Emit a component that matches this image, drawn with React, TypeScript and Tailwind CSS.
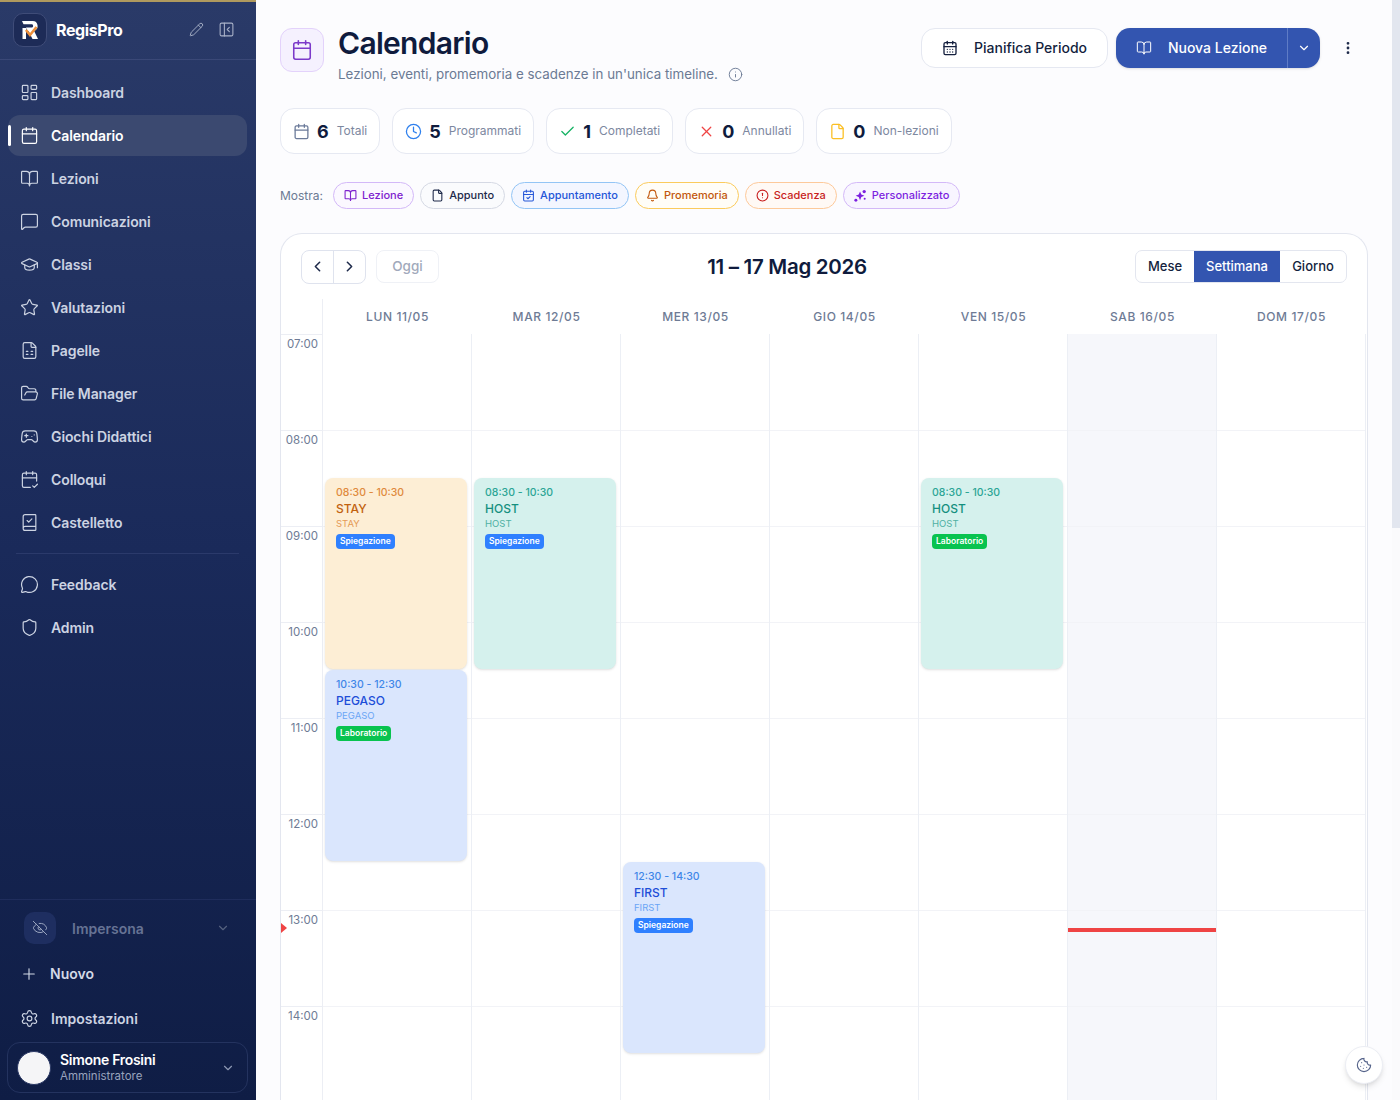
import React from 'react';
import {
  LayoutDashboard, Calendar, BookOpen, MessageSquare, GraduationCap, Star, FileSpreadsheet, FolderOpen,
  Gamepad2, CalendarCheck2, BookCheck, MessageCircle, Shield, EyeOff, Plus, Settings, ChevronDown, Pencil,
  PanelLeftClose, Info, Clock, Check, X, File, Bell, CircleAlert, CalendarDays, CalendarCheck,
  EllipsisVertical, Cookie, ChevronLeft, ChevronRight,
} from 'lucide-react';

const navTop = [
  { label: 'Dashboard', icon: LayoutDashboard },
  { label: 'Calendario', icon: Calendar, active: true },
  { label: 'Lezioni', icon: BookOpen },
  { label: 'Comunicazioni', icon: MessageSquare },
  { label: 'Classi', icon: GraduationCap },
  { label: 'Valutazioni', icon: Star },
  { label: 'Pagelle', icon: FileSpreadsheet },
  { label: 'File Manager', icon: FolderOpen },
  { label: 'Giochi Didattici', icon: Gamepad2 },
  { label: 'Colloqui', icon: CalendarCheck2 },
  { label: 'Castelletto', icon: BookCheck },
];

const stats = [
  { n: '6', label: 'Totali', icon: Calendar, color: 'text-[#6b7a99]' },
  { n: '5', label: 'Programmati', icon: Clock, color: 'text-[#2f80ed]' },
  { n: '1', label: 'Completati', icon: Check, color: 'text-[#16b364]' },
  { n: '0', label: 'Annullati', icon: X, color: 'text-[#ef4444]' },
  { n: '0', label: 'Non-lezioni', icon: File, color: 'text-[#fbbf24]' },
];

// filled sparkle cluster of the "Personalizzato" chip
const SparkleCluster = ({ size }: { size: number; strokeWidth?: number }) => (
  <svg width={size} height={size} viewBox="0 0 14 14" fill="currentColor">
    <path d="M6.5 2.6l1.4 3.3 3.3 1.4-3.3 1.4-1.4 3.3-1.4-3.3-3.3-1.4 3.3-1.4z" />
    <circle cx="11" cy="2.8" r="1.8" />
    <circle cx="2" cy="12" r="1.6" />
    <circle cx="11.5" cy="10.5" r="1.1" />
  </svg>
);

const chips = [
  { label: 'Lezione', icon: BookOpen, cls: 'border-[#d3b8f8] bg-[#fbf8ff] text-[#7e22ce]' },
  { label: 'Appunto', icon: File, cls: 'border-[#d5d9e4] bg-[#fafbfd] text-[#1e2a4a]' },
  { label: 'Appuntamento', icon: CalendarCheck, cls: 'border-[#93c5f5] bg-[#f3f6ff] text-[#2556d8]' },
  { label: 'Promemoria', icon: Bell, cls: 'border-[#fbcb5c] bg-[#fffdf7] text-[#c2570c]' },
  { label: 'Scadenza', icon: CircleAlert, cls: 'border-[#fdc99a] bg-[#fff9f5] text-[#c81e1e]' },
  { label: 'Personalizzato', icon: SparkleCluster, cls: 'border-[#d3b8f8] bg-[#f8f5ff] text-[#7c1fe0]' },
];

const days = ['LUN 11/05', 'MAR 12/05', 'MER 13/05', 'GIO 14/05', 'VEN 15/05', 'SAB 16/05', 'DOM 17/05'];
const hours = ['07:00', '08:00', '09:00', '10:00', '11:00', '12:00', '13:00', '14:00'];

const orange = { box: 'bg-[#fdeed5]', time: 'text-[#e08a3c]', title: 'text-[#c2620f]', sub: 'text-[#e59a55]' };
const teal = { box: 'bg-[#d5f1ed]', time: 'text-[#2ba595]', title: 'text-[#14907f]', sub: 'text-[#4fb0a3]' };
const blue = { box: 'bg-[#dae6fd]', time: 'text-[#3f86e8]', title: 'text-[#1d4ed8]', sub: 'text-[#6aa5f5]' };

const events = [
  { day: 0, top: 'top-[144px]', time: '08:30 - 10:30', title: 'STAY', tag: 'Spiegazione', c: orange },
  { day: 1, top: 'top-[144px]', time: '08:30 - 10:30', title: 'HOST', tag: 'Spiegazione', c: teal },
  { day: 4, top: 'top-[144px]', time: '08:30 - 10:30', title: 'HOST', tag: 'Laboratorio', c: teal },
  { day: 0, top: 'top-[336px]', time: '10:30 - 12:30', title: 'PEGASO', tag: 'Laboratorio', c: blue },
  { day: 2, top: 'top-[528px]', time: '12:30 - 14:30', title: 'FIRST', tag: 'Spiegazione', c: blue },
];

const NavItem = ({ label, icon: Icon, active }: { label: string; icon: any; active?: boolean }) => (
  <div className={`relative flex h-[41px] items-center gap-[12px] rounded-[12px] pl-[12px] text-[14px] font-semibold tracking-[-0.1px] ${active ? 'bg-[#3b4970] text-white' : 'text-[#ccd3e2]'}`}>
    {active && <span className="absolute left-0 top-[10px] h-[21px] w-[3px] rounded-full bg-white" />}
    <Icon size={19} strokeWidth={1.5} />
    {label}
  </div>
);

const Sidebar = () => (
  <aside className="flex h-[1100px] w-[256px] shrink-0 flex-col bg-gradient-to-b from-[#2a3a68] via-[#1a2a5a] to-[#0f1d45]">
    <div className="h-[2px] bg-[#b09a5e]" />
    <div className="flex h-[58px] items-center border-b border-[#3a4877] pb-[2px] pl-[13px] pr-[21px]">
      <div className="flex h-[34px] w-[34px] items-center justify-center rounded-[10px] border border-[#3f4c78] bg-[#1d2b57]">
        <svg width="20" height="22" viewBox="0 0 20 22" fill="none">
          <path d="M2 2h10.5a5 5 0 0 1 1.5 9.8L18 20h-5.5L8.5 12H7l-1-3.5h6a1.7 1.7 0 0 0 0-3.2H3.5z" fill="#fff" />
          <path d="M2.5 9H6v11H2.5z" fill="#fff" />
          <path d="M6 11l4 5 6.5-8" stroke="#ee8f3a" strokeWidth="2.6" fill="none" />
        </svg>
      </div>
      <span className="ml-[9px] text-[16px] font-bold tracking-[-0.4px] text-white">RegisPro</span>
      <Pencil size={15} strokeWidth={1.5} className="ml-auto text-[#aab3c9]" />
      <PanelLeftClose size={17} strokeWidth={1.5} className="ml-[14px] text-[#aab3c9]" />
    </div>
    <nav className="flex flex-col gap-[2px] pl-[8px] pr-[9px] pt-[12px]">
      {navTop.map((n) => <NavItem key={n.label} {...n} />)}
      <div className="mx-[8px] my-[8px] h-px bg-[#2b3a6b]" />
      <NavItem label="Feedback" icon={MessageCircle} />
      <NavItem label="Admin" icon={Shield} />
    </nav>
    <div className="mt-auto border-t border-[#1f2d5c] pb-[7px]">
      <div className="flex h-[56px] items-center pl-[24px] pr-[26px]">
        <div className="flex h-[32px] w-[32px] items-center justify-center rounded-[10px] bg-[#1e2e60]">
          <EyeOff size={16} strokeWidth={1.5} className="text-[#9ba6c0]" />
        </div>
        <span className="ml-[16px] text-[14px] font-semibold text-[#667394]">Impersona</span>
        <ChevronDown size={14} className="ml-auto text-[#55627f]" />
      </div>
      <div className="mt-[2px] flex h-[31px] items-center gap-[12px] pl-[20px] text-[14px] font-semibold text-[#d3d9e6]">
        <Plus size={18} strokeWidth={1.5} />
        Nuovo
      </div>
      <div className="mt-[14px] flex h-[31px] items-center gap-[12px] pl-[20px] text-[14px] font-semibold text-[#ccd3e2]">
        <Settings size={19} strokeWidth={1.5} />
        Impostazioni
      </div>
      <div className="ml-[7px] mr-[8px] mt-[8px] flex h-[51px] items-center rounded-[13px] border border-[#24335f] pl-[9px] pr-[12px]">
        <div className="h-[34px] w-[34px] rounded-full border border-[#2c3a66] bg-[#f5f5f7]" />
        <div className="ml-[9px]">
          <div className="text-[14px] font-semibold leading-[17px] tracking-[-0.3px] text-white">Simone Frosini</div>
          <div className="text-[11.5px] leading-[17px] text-[#98a3bd]">Amministratore</div>
        </div>
        <ChevronDown size={14} className="ml-auto text-[#8d98b3]" />
      </div>
    </div>
  </aside>
);

const PageHeader = () => (
  <div className="flex h-[80px] items-start">
    <div className="flex h-[44px] w-[44px] items-center justify-center rounded-[12px] border border-[#e3d2fb] bg-[#f5f1fe]">
      <Calendar size={22} strokeWidth={1.7} className="text-[#7c3aca]" />
    </div>
    <div className="ml-[14px]">
      <h1 className="mt-[-4px] text-[30px] font-semibold leading-[38px] tracking-[-0.7px] text-[#0f1b3d]">Calendario</h1>
      <div className="mt-[3px] flex items-center gap-[10px] text-[13.35px] leading-[18px] text-[#6b7a94]">
        Lezioni, eventi, promemoria e scadenze in un'unica timeline.
        <Info size={15} strokeWidth={1.5} />
      </div>
    </div>
    <div className="ml-auto flex items-center">
      <button className="flex h-[40px] w-[187px] items-center justify-center gap-[16px] rounded-[14px] border border-[#e5e8f1] bg-white pb-[1px] text-[14px] font-medium text-[#141f3e]">
        <CalendarDays size={16} strokeWidth={2} />
        Pianifica Periodo
      </button>
      <div className="ml-[8px] flex h-[40px] w-[204px] items-center rounded-[14px] bg-[#3355b0] text-white shadow-sm">
        <div className="flex h-full flex-1 items-center justify-center gap-[16px] pb-[1px] text-[14px] font-medium">
          <BookOpen size={16} strokeWidth={1.5} />
          Nuova Lezione
        </div>
        <div className="flex h-full w-[33px] items-center justify-center border-l border-[#5f7cc6]">
          <ChevronDown size={14} />
        </div>
      </div>
      <EllipsisVertical size={16} strokeWidth={2.2} className="ml-[20px] mr-[12px] text-[#1e2a4a]" />
    </div>
  </div>
);

const Stats = () => (
  <div className="flex gap-[12px]">
    {stats.map((s) => (
      <div key={s.label} className="flex h-[46px] items-center rounded-[14px] border border-[#e6e9f2] bg-white pl-[12px] pr-[12px]">
        <s.icon size={17} strokeWidth={1.8} className={s.color} />
        <span className="ml-[7px] text-[18px] font-bold text-[#0f1b3d]">{s.n}</span>
        <span className="ml-[8px] text-[12px] text-[#7d889f]">{s.label}</span>
      </div>
    ))}
  </div>
);

const Filters = () => (
  <div className="mt-[28px] flex items-center">
    <span className="mr-[10px] text-[12px] text-[#6b7a94]">Mostra:</span>
    <div className="flex gap-[6px]">
      {chips.map((c) => (
        <div key={c.label} className={`flex h-[27px] items-center gap-[5px] rounded-full border px-[10px] text-[11px] font-medium ${c.cls}`}>
          <c.icon size={13} strokeWidth={2} />
          {c.label}
        </div>
      ))}
    </div>
  </div>
);

const EventCard = ({ time, title, tag, top, c }: { time: string; title: string; tag: string; top: string; c: typeof orange }) => (
  <div className={`absolute left-[2px] right-[4px] h-[191px] rounded-[8px] px-[11px] pt-[7px] shadow-sm ${top} ${c.box}`}>
    <div className={`text-[10.5px] font-medium leading-[15px] ${c.time}`}>{time}</div>
    <div className={`text-[12px] font-medium leading-[17px] ${c.title}`}>{title}</div>
    <div className={`text-[9.5px] leading-[13px] ${c.sub}`}>{title}</div>
    <div className={`mt-[4px] w-fit rounded-[4px] px-[4px] text-[8.5px] font-semibold leading-[15px] text-white ${tag === 'Laboratorio' ? 'bg-[#08c34f]' : 'bg-[#2f80ff]'}`}>{tag}</div>
  </div>
);

const CalendarCard = () => (
  <div className="mt-[24px] h-[880px] overflow-hidden rounded-t-[22px] border border-b-0 border-[#e3e6ef] bg-white">
    <div className="flex h-[65px] items-center px-[20px]">
      <div className="flex items-center">
        <div className="flex h-[34px] w-[65px] rounded-[8px] border border-[#dfe3ee] text-[#1e2a4a]">
          <div className="flex flex-1 items-center justify-center border-r border-[#dfe3ee]"><ChevronLeft size={17} strokeWidth={2.2} /></div>
          <div className="flex flex-1 items-center justify-center"><ChevronRight size={17} strokeWidth={2.2} /></div>
        </div>
        <div className="ml-[10px] flex h-[33px] w-[63px] items-center justify-center rounded-[8px] border border-[#eff1f6] text-[13.5px] font-medium text-[#a1a9bb]">Oggi</div>
      </div>
      <div className="flex-1 pt-[1px] text-center text-[20.5px] font-semibold tracking-[-0.3px] text-[#0f1b3d]">11 – 17 Mag 2026</div>
      <div className="flex h-[33px] w-[212px] overflow-hidden rounded-[7px] border border-[#e3e6ef] text-[13px] font-medium text-[#141f3e]">
        <div className="flex w-[58px] items-center justify-center">Mese</div>
        <div className="flex w-[86px] items-center justify-center bg-[#3355b0] text-white">Settimana</div>
        <div className="flex flex-1 items-center justify-center">Giorno</div>
      </div>
    </div>
    <div className="grid h-[35px] grid-cols-[42px_repeat(7,149px)]">
      <div className="border-r border-[#eceef4]" />
      {days.map((d) => (
        <div key={d} className="flex items-center justify-center text-[12px] font-medium tracking-[0.6px] text-[#6e7b95]">{d}</div>
      ))}
    </div>
    <div className="relative grid grid-cols-[42px_repeat(7,149px)]">
      <div className="relative border-r border-[#eceef4]">
        {hours.map((h) => (
          <div key={h} className="h-[96px] border-t border-[#eceef4] pr-[4px] pt-[2px] text-right text-[11.5px] leading-[14px] text-[#6e7b95]">{h}</div>
        ))}
        <span className="absolute left-0 top-[589px] h-0 w-0 border-y-[5px] border-l-[6px] border-y-transparent border-l-[#ef4444]" />
      </div>
      {days.map((d, i) => (
        <div key={d} className={`relative border-r border-[#eceff5] ${i === 5 ? 'bg-[#f6f7fb]' : ''}`}>
          {hours.map((h) => (
            <div key={h} className="h-[96px] border-t border-[#f2f3f7] first:border-t-transparent" />
          ))}
          {events.filter((e) => e.day === i).map((e) => <EventCard key={e.time} {...e} />)}
          {i === 5 && <div className="absolute left-0 right-0 top-[594px] h-[4px] bg-[#ef4444]" />}
        </div>
      ))}
    </div>
  </div>
);

export default function App() {
  return (
    <div className="relative flex h-[1100px] w-[1400px] overflow-hidden bg-[#fcfcfe] font-['Inter',sans-serif]">
      <Sidebar />
      <main className="h-[1100px] flex-1 overflow-hidden pl-[24px] pr-[24px] pt-[28px]">
        <PageHeader />
        <Stats />
        <Filters />
        <CalendarCard />
      </main>
      {/* page scrollbar */}
      <div className="h-[1100px] w-[8px] shrink-0 bg-[#fafafc]">
        <div className="h-[528px] bg-[#e2e6ef]" />
      </div>
      <div className="absolute bottom-[16px] right-[17px] flex h-[38px] w-[38px] items-center justify-center rounded-full border border-[#eceef4] bg-white shadow-md">
        <Cookie size={16} strokeWidth={1.7} className="text-[#55638a]" />
      </div>
    </div>
  );
}
